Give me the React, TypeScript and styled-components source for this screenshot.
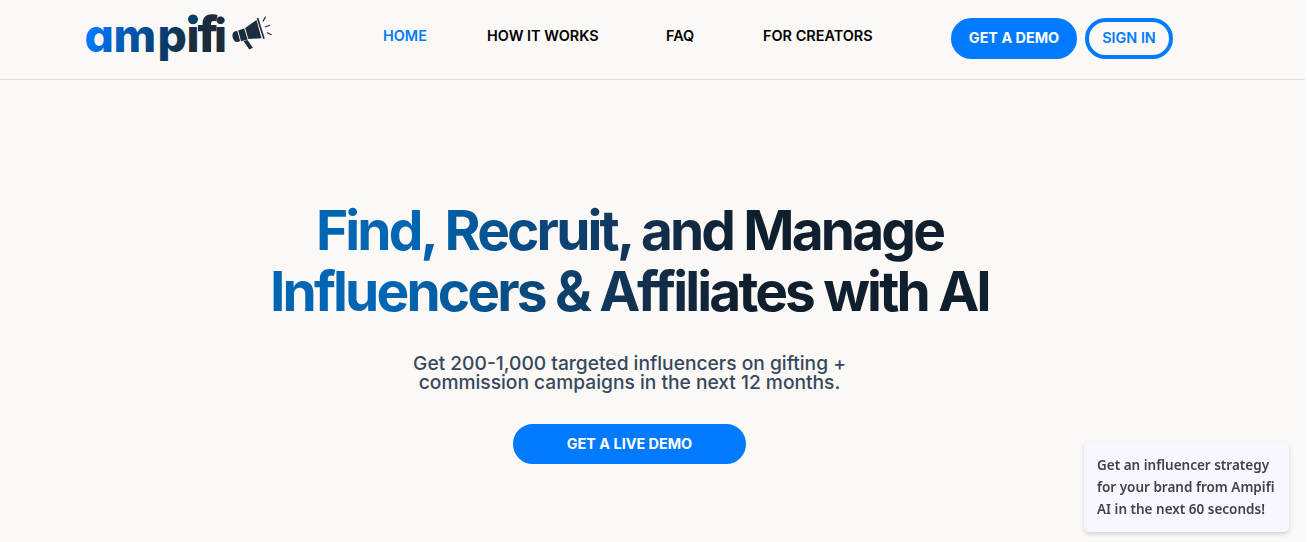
import React from "react";
import styled, { createGlobalStyle, css } from "styled-components";

const GlobalStyle = createGlobalStyle`
  * {
    box-sizing: border-box;
  }

  body {
    margin: 0;
    background: #fff;
    font-family: "Inter", sans-serif;
    overflow: hidden;
  }
`;

const Page = styled.div`
  width: 1305px;
  min-height: 542px;
  background: #fcf8f5;
`;

const Header = styled.header`
  display: flex;
  align-items: flex-start;
  height: 80px;
  padding-left: 80px;
  border-bottom: 1px solid #e1dddb;
`;

const LogoLink = styled.a`
  display: block;
  width: 200px;
  height: 72px;
`;

const LogoText = styled.text`
  font-family: "Inter", sans-serif;
  font-weight: 800;
  font-size: 46px;
  font-feature-settings: "cv11" 1;
`;

const TallLetter = styled.tspan`
  font-size: 50px;
`;

const Nav = styled.nav`
  display: flex;
  gap: 60px;
  margin: 27px 0 0 103px;
`;

const NavItem = styled.a<{ $active?: boolean; $width: number }>`
  width: ${(p) => p.$width}px;
  font-size: 14.45px;
  font-weight: 600;
  line-height: 18px;
  white-space: nowrap;
  text-decoration: none;
  color: ${(p) => (p.$active ? "#007bff" : "#000")};
`;

const Actions = styled.div`
  display: flex;
  gap: 8px;
  margin: 18px 0 0 76px;
`;

const Button = styled.button<{ $width: number; $height?: number; $outline?: boolean }>`
  display: flex;
  align-items: center;
  justify-content: center;
  width: ${(p) => p.$width}px;
  height: ${(p) => p.$height || 41}px;
  padding: 0 0 1px;
  border: 4px solid #007bff;
  border-radius: 21px;
  background: #007bff;
  color: #fff;
  font-family: inherit;
  font-size: 14.4px;
  font-weight: 700;
  line-height: 18px;
  white-space: nowrap;

  ${(p) =>
    p.$outline &&
    css`
      background: transparent;
      color: #007bff;
      font-weight: 600;
    `}
`;

const Hero = styled.main`
  display: flex;
  flex-direction: column;
  align-items: center;
  width: 1259px;
  padding-top: 120px;
`;

const Title = styled.h1`
  width: 724px;
  margin: 0;
  text-align: center;
  white-space: nowrap;
  font-size: 55px;
  font-weight: 700;
  line-height: 61px;
  letter-spacing: -2.85px;
  background: linear-gradient(100deg, #0066b3 20%, #12304f 52%, #0f1f2e 65%);
  background-clip: text;
  -webkit-background-clip: text;
  color: transparent;
`;

const Lead = styled.p`
  margin: 32px 0 0;
  text-align: center;
  font-size: 19.2px;
  font-weight: 500;
  line-height: 19px;
  color: #34495e;
`;

const Cta = styled.div`
  margin-top: 32px;
`;

const Bubble = styled.aside`
  position: fixed;
  left: 1084px;
  top: 442px;
  width: 205px;
  height: 90px;
  padding: 12px 13px;
  border-radius: 5px;
  background: #f7f7ff;
  box-shadow: 0 2px 4px rgba(0, 0, 0, 0.16);
  font-family: "Noto Sans", sans-serif;
  font-size: 13.5px;
  font-weight: 600;
  line-height: 22px;
  white-space: nowrap;
  color: #424248;
`;

const Logo = () => (
  <LogoLink href="#">
    <svg width="200" height="72" viewBox="80 0 200 72" role="img">
      <defs>
        <linearGradient id="brand" gradientUnits="userSpaceOnUse" x1="90" y1="28" x2="185" y2="62">
          <stop offset="0" stopColor="#007bff" />
          <stop offset="0.65" stopColor="#00427c" />
          <stop offset="1" stopColor="#1b2d3d" />
        </linearGradient>
      </defs>
      <LogoText x="84.5 113.5 157.5 186.5" y="52" fill="url(#brand)">
        ampi<TallLetter x="197.5">f</TallLetter><tspan x="214">i</tspan>
      </LogoText>
      <circle cx="193" cy="19.3" r="4.9" fill="#073e6a" />
      <g fill="#1b2d3d">
        <path d="M234.6 31.5 L237.2 30.8 L240.2 41.3 L237 42 Q234.5 42 233 38.5 Q231.3 33 234.6 31.5Z" />
        <path d="M238.2 30.4 L244.2 28.4 L247.7 39.5 L241 41.2Z" />
        <path d="M245.2 28 L256.5 20 L261.5 38.3 L248.4 39Z" />
        <path d="M256.7 18.3 L258.3 17.8 L264.8 38.4 L263.2 38.9Z" />
        <path d="M243.5 41 L247.5 40 L252.8 47.8 L249.3 49.6Z" />
      </g>
      <path d="M263 21.5 L265.5 16.8 M264.8 27 L270 25.2 M266.8 32.5 L271.5 34.7" stroke="#1b2d3d" strokeWidth="1.2" />
    </svg>
  </LogoLink>
);

const App = () => {
  return (
    <Page>
      <GlobalStyle />
      <Header>
        <Logo />
        <Nav>
          <NavItem href="#" $active $width={44}>HOME</NavItem>
          <NavItem href="#" $width={119}>HOW IT WORKS</NavItem>
          <NavItem href="#" $width={37}>FAQ</NavItem>
          <NavItem href="#" $width={112}>FOR CREATORS</NavItem>
        </Nav>
        <Actions>
          <Button $width={126}>GET A DEMO</Button>
          <Button $width={88} $outline>SIGN IN</Button>
        </Actions>
      </Header>
      <Hero>
        <Title>
          Find, Recruit, and Manage
          <br />
          Influencers &amp; Affiliates with AI
        </Title>
        <Lead>
          Get 200-1,000 targeted influencers on gifting +
          <br />
          commission campaigns in the next 12 months.
        </Lead>
        <Cta>
          <Button $width={233} $height={40}>GET A LIVE DEMO</Button>
        </Cta>
      </Hero>
      <Bubble>
        Get an influencer strategy
        <br />
        for your brand from Ampifi
        <br />
        AI in the next 60 seconds!
      </Bubble>
    </Page>
  );
};

export default App;
